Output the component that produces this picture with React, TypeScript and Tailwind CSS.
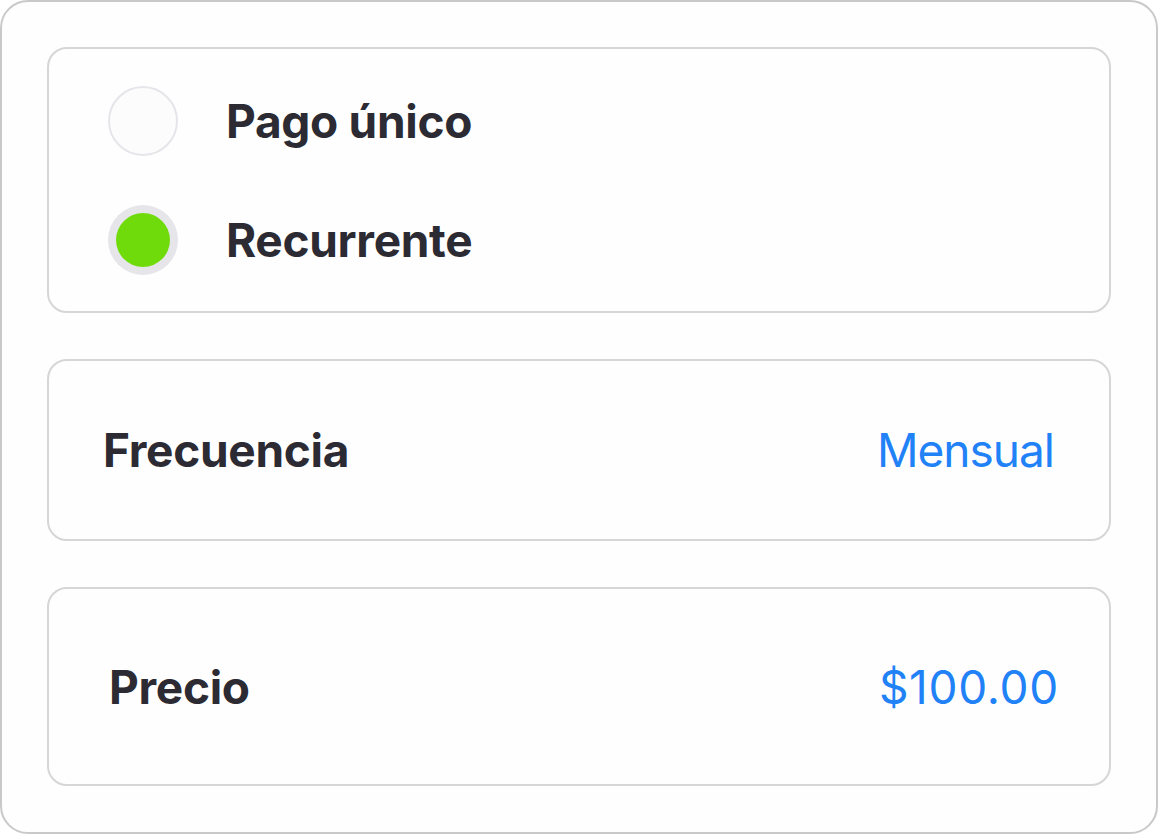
export default function App() {
  return (
    <div
      className="w-[1158px] h-[834px] bg-white"
      style={{ fontFamily: "Inter, 'Liberation Sans', sans-serif" }}
    >
      <div className="w-full h-full rounded-[28px] border-2 border-[#c9c9cc] bg-[#fefefe] pt-[45px] px-[45px] flex flex-col">
        {/* Payment type */}
        <div className="h-[266px] rounded-[20px] border-2 border-[#d6d6d8] flex flex-col justify-center pl-[59px] gap-[49px]">
          <RadioRow label="Pago único" checked={false} />
          <RadioRow label="Recurrente" checked />
        </div>

        <ValueRow
          label="Frecuencia"
          value="Mensual"
          box="mt-[46px] h-[182px] pl-[54px] pr-[55px]"
          valueTracking="tracking-[-1px]"
        />
        <ValueRow
          label="Precio"
          value="$100.00"
          box="mt-[46px] h-[199px] pl-[60px] pr-[50px] pt-[1px]"
          valueTracking="tracking-[0.7px]"
        />
      </div>
    </div>
  );
}

function RadioRow({ label, checked }: { label: string; checked: boolean }) {
  return (
    <div className="flex items-center gap-[48px]">
      {checked ? (
        <div className="w-[70px] h-[70px] rounded-full bg-[#e6e6ea] flex items-center justify-center">
          <div className="w-[54px] h-[54px] rounded-full bg-[#6fdb0b]" />
        </div>
      ) : (
        <div className="w-[70px] h-[70px] rounded-full border-2 border-[#e6e6ea] bg-[#fcfcfd]" />
      )}
      <span className="text-[46px] font-bold text-[#2c2b33] tracking-[-0.3px] leading-none">
        {label}
      </span>
    </div>
  );
}

function ValueRow({
  label,
  value,
  box,
  valueTracking,
}: {
  label: string;
  value: string;
  box: string;
  valueTracking: string;
}) {
  return (
    <div
      className={`${box} rounded-[20px] border-2 border-[#d6d6d8] flex items-center justify-between`}
    >
      <span className="text-[46px] font-bold text-[#2c2b33] tracking-[-0.3px] leading-none">
        {label}
      </span>
      <span className={`text-[46px] text-[#2181f7] leading-none ${valueTracking}`}>
        {value}
      </span>
    </div>
  );
}
